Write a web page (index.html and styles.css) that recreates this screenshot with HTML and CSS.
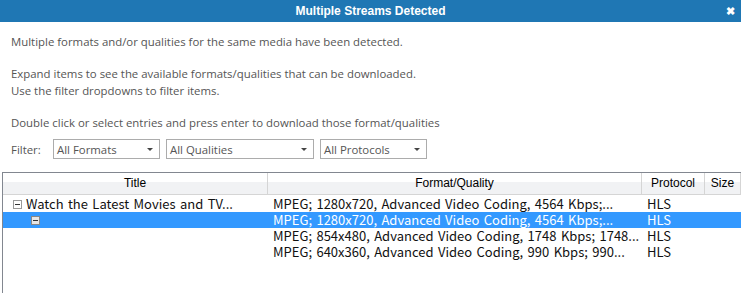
FILE: index.html
```html
<!DOCTYPE html>
<html lang="en">
<head>
  <meta charset="UTF-8">
  <title>Multiple Streams Detected</title>
  <link rel="stylesheet" href="styles.css">
</head>
<body>
  <div class="titlebar">
    <span class="title">Multiple Streams Detected</span>
    <span class="close">&#x2716;</span>
  </div>

  <div class="intro">
    <p>Multiple formats and/or qualities for the same media have been detected.</p>
    <p>Expand items to see the available formats/qualities that can be downloaded.<br>
    Use the filter dropdowns to filter items.</p>
    <p>Double click or select entries and press enter to download those format/qualities</p>
  </div>

  <div class="filters">
    <span class="filter-label">Filter:</span>
    <div class="select sel-formats"><span>All Formats</span><i class="arrow"></i></div>
    <div class="select sel-qualities"><span>All Qualities</span><i class="arrow"></i></div>
    <div class="select sel-protocols"><span>All Protocols</span><i class="arrow"></i></div>
  </div>

  <div class="grid">
    <div class="row head">
      <div class="col c-title">Title</div>
      <div class="col c-format">Format/Quality</div>
      <div class="col c-proto">Protocol</div>
      <div class="col c-size">Size</div>
    </div>
    <div class="row">
      <div class="col c-title"><i class="tog"></i>Watch the Latest Movies and TV...</div>
      <div class="col c-format">MPEG; 1280x720, Advanced Video Coding, 4564 Kbps;...</div>
      <div class="col c-proto">HLS</div>
      <div class="col c-size"></div>
    </div>
    <div class="row selected">
      <div class="col c-title"><i class="tog sub"></i></div>
      <div class="col c-format">MPEG; 1280x720, Advanced Video Coding, 4564 Kbps;...</div>
      <div class="col c-proto">HLS</div>
      <div class="col c-size"></div>
    </div>
    <div class="row">
      <div class="col c-title"></div>
      <div class="col c-format">MPEG; 854x480, Advanced Video Coding, 1748 Kbps; 1748...</div>
      <div class="col c-proto">HLS</div>
      <div class="col c-size"></div>
    </div>
    <div class="row">
      <div class="col c-title"></div>
      <div class="col c-format">MPEG; 640x360, Advanced Video Coding, 990 Kbps; 990...</div>
      <div class="col c-proto">HLS</div>
      <div class="col c-size"></div>
    </div>
  </div>
</body>
</html>
```

FILE: styles.css
```css
html, body {
  margin: 0;
  height: 100%;
  overflow: hidden;
}
body {
  font-family: "Open Sans", "Noto Sans", sans-serif;
  font-size: 11.4px;
  color: #555;
  background: #fff;
  display: flex;
  flex-direction: column;
}
.titlebar {
  height: 22px;
  flex-shrink: 0;
  background: #1f77b4;
  color: #fff;
  display: flex;
  align-items: center;
  justify-content: center;
  position: relative;
}
.title {
  font-family: "Liberation Sans", sans-serif;
  font-weight: bold;
  font-size: 12px;
}
.close {
  position: absolute;
  right: 6px;
  top: 3px;
  font-size: 11px;
  font-weight: bold;
}
.intro {
  padding: 11px 11px 0;
}
.intro p {
  margin: 0 0 15px;
  line-height: 17px;
}
.filters {
  display: flex;
  align-items: center;
  padding: 0 0 0 11px;
  margin-top: -7px;
}
.filter-label {
  width: 42px;
}
.select {
  border: 1px solid #acacac;
  display: flex;
  align-items: center;
  justify-content: space-between;
  padding: 0 6px 0 3px;
  margin-right: 6px;
  color: #555;
  box-sizing: border-box;
  height: 20px;
}
.sel-formats { width: 107px; }
.sel-qualities { width: 148px; }
.sel-protocols { width: 107px; }
.arrow {
  width: 0;
  height: 0;
  border-left: 3px solid transparent;
  border-right: 3px solid transparent;
  border-top: 3px solid #444;
}
.grid {
  flex: 1;
  margin: 13px 0 0 2px;
  border-left: 1px solid #828790;
  border-top: 1px solid #828790;
  font-family: "Noto Sans CJK KR", "Noto Sans", sans-serif;
  font-size: 13px;
  word-spacing: 1.5px;
  color: #111;
}
.row {
  display: flex;
  height: 16px;
  line-height: 16px;
}
.row.head {
  height: 22px;
  line-height: 21px;
  background: linear-gradient(#fff 0%, #fff 40%, #f1f2f4 41%, #f1f2f4 100%);
  font-family: "Liberation Sans", sans-serif;
  font-size: 12px;
  word-spacing: 0;
  color: #000;
  margin-bottom: 1px;
}
.row.head .col {
  text-align: center;
  border-right: 1px solid #d5d5d5;
  border-bottom: 1px solid #d5d5d5;
  padding: 0;
}
.row.selected {
  background: #3399ff;
  color: #fff;
}
.col {
  white-space: nowrap;
  overflow: hidden;
  padding-left: 5px;
  box-sizing: border-box;
}
.c-title { width: 265px; padding-left: 10px; display: flex; align-items: center; }
.row.head .c-title { display: block; }
.c-format { width: 374px; }
.c-proto { width: 63px; }
.c-size { width: 36px; }
.tog {
  display: inline-block;
  flex-shrink: 0;
  width: 9px;
  height: 9px;
  border: 1px solid #999;
  box-sizing: border-box;
  position: relative;
  margin-right: 4px;
  background: #fff;
}
.tog::after {
  content: "";
  position: absolute;
  left: 1px;
  right: 1px;
  top: 3px;
  height: 1px;
  background: #333;
}
.tog.sub {
  margin-left: 18px;
  background: #e6e6e6;
  border-color: #888;
}
```
